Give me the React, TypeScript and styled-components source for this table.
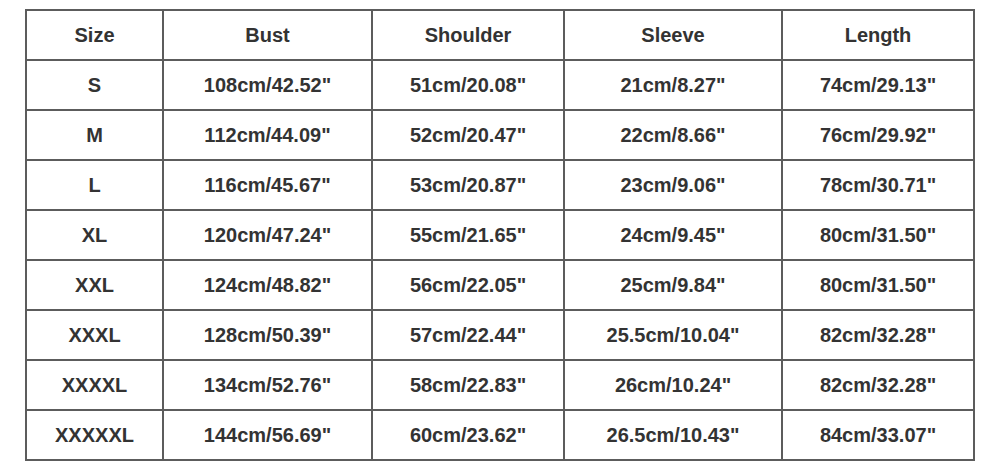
import styled, { createGlobalStyle } from 'styled-components';

const GlobalStyle = createGlobalStyle`
  html, body {
    margin: 0;
    padding: 0;
    background: #ffffff;
  }
  body {
    font-family: "Liberation Sans", Arial, sans-serif;
  }
`;

const headers = ['Size', 'Bust', 'Shoulder', 'Sleeve', 'Length'];
const colWidths = [137, 209, 192, 218, 192];

const rows = [
  ['S', '108cm/42.52"', '51cm/20.08"', '21cm/8.27"', '74cm/29.13"'],
  ['M', '112cm/44.09"', '52cm/20.47"', '22cm/8.66"', '76cm/29.92"'],
  ['L', '116cm/45.67"', '53cm/20.87"', '23cm/9.06"', '78cm/30.71"'],
  ['XL', '120cm/47.24"', '55cm/21.65"', '24cm/9.45"', '80cm/31.50"'],
  ['XXL', '124cm/48.82"', '56cm/22.05"', '25cm/9.84"', '80cm/31.50"'],
  ['XXXL', '128cm/50.39"', '57cm/22.44"', '25.5cm/10.04"', '82cm/32.28"'],
  ['XXXXL', '134cm/52.76"', '58cm/22.83"', '26cm/10.24"', '82cm/32.28"'],
  ['XXXXXL', '144cm/56.69"', '60cm/23.62"', '26.5cm/10.43"', '84cm/33.07"'],
];

const App = () => {
  return (
    <>
      <GlobalStyle />
      <Page>
        <SizeTable>
          <colgroup>
            {colWidths.map((w, i) => (
              <col key={i} style={{ width: w }} />
            ))}
          </colgroup>
          <thead>
            <Row>
              {headers.map((h) => (
                <HeadCell key={h}>{h}</HeadCell>
              ))}
            </Row>
          </thead>
          <tbody>
            {rows.map((r) => (
              <Row key={r[0]}>
                {r.map((c, i) => (
                  <Cell key={i}>{c}</Cell>
                ))}
              </Row>
            ))}
          </tbody>
        </SizeTable>
      </Page>
    </>
  );
};

const Page = styled.div`
  width: 1000px;
  height: 471px;
  padding: 9px 0 0 25px;
  box-sizing: border-box;
`;

const SizeTable = styled.table`
  width: 950px;
  table-layout: fixed;
  border-collapse: collapse;
  color: #333333;
  font-size: 20px;
  font-weight: bold;
`;

const Row = styled.tr`
  height: 50px;
`;

const HeadCell = styled.th`
  border: 2px solid #5c5c5c;
  padding: 0;
  text-align: center;
  vertical-align: middle;
  font-weight: bold;
`;

const Cell = styled.td`
  border: 2px solid #5c5c5c;
  padding: 0;
  text-align: center;
  vertical-align: middle;
`;

export default App;
